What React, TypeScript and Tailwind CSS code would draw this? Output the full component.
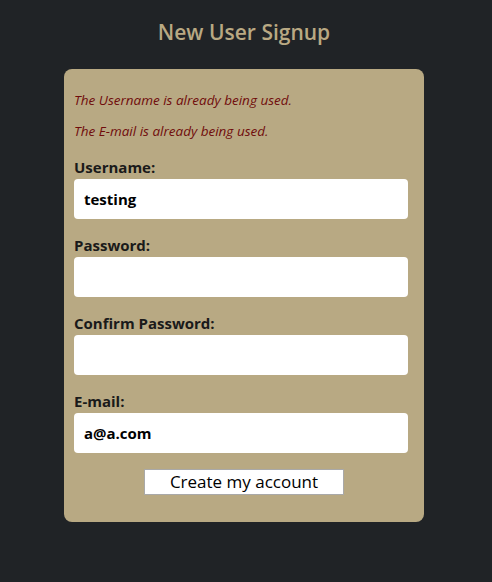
export default function App() {
	const font = { fontFamily: '"Open Sans", "Lato", sans-serif' };
	return (
		<div className="min-h-[582px] w-full bg-[#202326]" style={font}>
			<div className="w-[488px] pt-[18px]">
				<h1 className="text-center text-[21px] font-semibold leading-[28px] text-[#b9a983]">
					New User Signup
				</h1>
				<form className="mx-auto mt-[23px] w-[360px] rounded-[8px] bg-[#b8a983] px-[10px] pt-[22px] pb-[27px]">
					<p className="text-[13.5px] italic leading-[18px] text-[#700c0c]">
						The Username is already being used.
					</p>
					<p className="mt-[13px] text-[13.5px] italic leading-[18px] text-[#700c0c]">
						The E-mail is already being used.
					</p>
					<div className="mt-[18px] flex flex-col gap-[17px]">
						<Field label="Username:" value="testing" />
						<Field label="Password:" value="" type="password" />
						<Field label="Confirm Password:" value="" type="password" />
						<Field label="E-mail:" value="a@a.com" />
					</div>
					<div className="mt-[16px] flex justify-center">
						<button
							type="button"
							className="h-[26px] w-[200px] border border-[#a9a9a9] bg-white text-[17px] leading-[22px] text-black"
						>
							Create my account
						</button>
					</div>
				</form>
			</div>
		</div>
	);
}

function Field({
	label,
	value,
	type = "text",
}: {
	label: string;
	value: string;
	type?: string;
}) {
	return (
		<label className="flex flex-col">
			<span className="text-[15px] font-bold leading-[19px] text-[#1a1a1a]">{label}</span>
			<input
				type={type}
				defaultValue={value}
				className="mt-[2px] h-[40px] w-[334px] rounded-[4px] bg-white px-[10px] text-[15px] font-bold text-black outline-none"
			/>
		</label>
	);
}
